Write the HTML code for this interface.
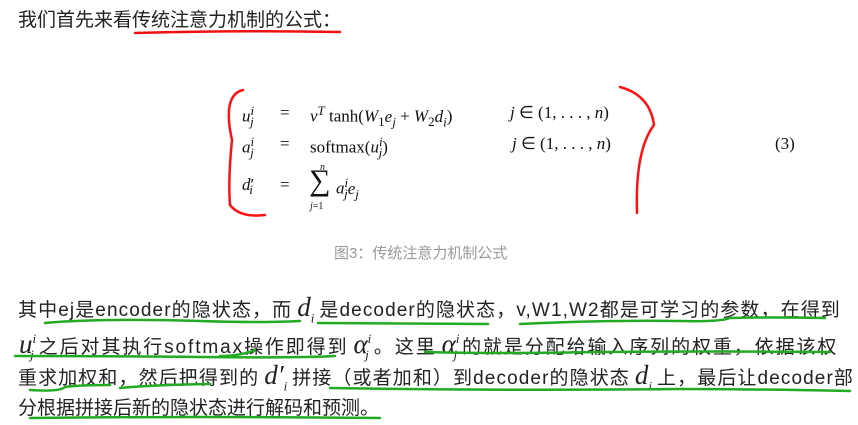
<!DOCTYPE html>
<html><head><meta charset="utf-8"><style>
body{margin:0;width:858px;height:425px;background:#fff;overflow:hidden;position:relative;font-family:"Liberation Sans","Noto Sans CJK SC",sans-serif;color:#222}
.l{position:absolute;white-space:nowrap;font-size:19px;line-height:22px;letter-spacing:1.1px}
.m{font-family:"Liberation Serif",serif;font-style:italic;font-size:27px;padding:0 5px;letter-spacing:0}
.f{position:absolute;font-family:"Liberation Serif",serif;font-size:17px;color:#111;white-space:nowrap}
.i{font-style:italic}
sub,sup{font-size:13px}
</style></head><body>
<div class="l" style="left:18px;top:10px;letter-spacing:0">我们首先来看传统注意力机制的公式：</div>

<div class="f" style="left:242px;top:103px"><span class="i">u</span><sup class="i">i</sup><sub class="i" style="margin-left:-4px">j</sub></div>
<div class="f" style="left:280px;top:103px">=</div>
<div class="f" style="left:310px;top:103px"><span class="i">v</span><sup class="i">T</sup> tanh(<span class="i">W</span><sub>1</sub><span class="i">e<sub>j</sub></span> + <span class="i">W</span><sub>2</sub><span class="i">d<sub>i</sub></span>)</div>
<div class="f" style="left:510px;top:103px"><span class="i">j</span> ∈ (1, . . . , <span class="i">n</span>)</div>
<div class="f" style="left:242px;top:134px"><span class="i">a</span><sup class="i">i</sup><sub class="i" style="margin-left:-4px">j</sub></div>
<div class="f" style="left:280px;top:134px">=</div>
<div class="f" style="left:310px;top:134px">softmax(<span class="i">u</span><sup class="i">i</sup><sub class="i" style="margin-left:-4px">j</sub>)</div>
<div class="f" style="left:512px;top:134px"><span class="i">j</span> ∈ (1, . . . , <span class="i">n</span>)</div>
<div class="f" style="left:775px;top:134px">(3)</div>
<div class="f" style="left:242px;top:175px"><span class="i">d</span>′<sub class="i" style="margin-left:-5px">i</sub></div>
<div class="f" style="left:280px;top:175px">=</div>
<div class="f" style="left:320px;top:162px;font-size:10px" ><span class="i">n</span></div>
<div class="f" style="left:309px;top:165px;font-size:30px;line-height:32px">∑</div>
<div class="f" style="left:310px;top:201px;font-size:10px"><span class="i">j</span>=1</div>
<div class="f" style="left:336px;top:175px"><span class="i">a</span><sup class="i">i</sup><sub class="i" style="margin-left:-4px">j</sub><span class="i">e<sub>j</sub></span></div>

<div class="l" style="left:334px;top:243px;font-size:15px;color:#999;letter-spacing:0">图3：传统注意力机制公式</div>

<div class="l" style="left:18px;top:296px">其中ej是encoder的隐状态，而<span class="m">d<sub>i</sub></span>是decoder的隐状态，v,W1,W2都是可学习的参数，在得到</div>
<div class="l" style="left:14px;top:328px;letter-spacing:1.9px"><span class="m">u<sup>i</sup><sub style="margin-left:-6px">j</sub></span>之后对其执行softmax操作即得到<span class="m">α<sup>i</sup><sub style="margin-left:-6px">j</sub></span>。这里<span class="m">α<sup>i</sup><sub style="margin-left:-6px">j</sub></span>的就是分配给输入序列的权重，依据该权</div>
<div class="l" style="left:18px;top:364px">重求加权和，然后把得到的<span class="m">d′<sub>i</sub></span>拼接（或者加和）到decoder的隐状态<span class="m">d<sub>i</sub></span>上，最后让decoder部</div>
<div class="l" style="left:18px;top:398px;letter-spacing:0">分根据拼接后新的隐状态进行解码和预测。</div>

<svg style="position:absolute;left:0;top:0" width="858" height="425" fill="none" stroke-linecap="round">
<path d="M135 33 Q240 30 340 32" stroke="#e11" stroke-width="2.5"/>
<path d="M243 90 Q222 95 232 140 Q228 180 230 205 Q240 218 265 215" stroke="#f11" stroke-width="2.5"/>
<path d="M620 87 Q650 95 654 125 Q635 150 637 213" stroke="#f11" stroke-width="2.5"/>
<g stroke="#2a2" stroke-width="2.5">
<path d="M45 323 Q100 318 200 321 Q260 323 300 321"/>
<path d="M318 323 L488 324"/>
<path d="M520 324 Q600 320 680 321 Q720 322 730 318 Q780 317 825 318"/>
<path d="M15 356 Q100 356 200 357 Q300 358 335 356"/>
<path d="M255 350 Q240 356 220 356"/>
<path d="M425 352 Q500 354 600 352 Q700 351 830 352"/>
<path d="M30 390 Q60 392 65 387 Q80 385 110 385"/>
<path d="M120 388 Q150 385 210 384"/>
<path d="M330 388 Q500 391 680 389 Q750 389 850 391"/>
<path d="M30 418 Q200 416 380 418"/>
</g>
</svg>
</body></html>
